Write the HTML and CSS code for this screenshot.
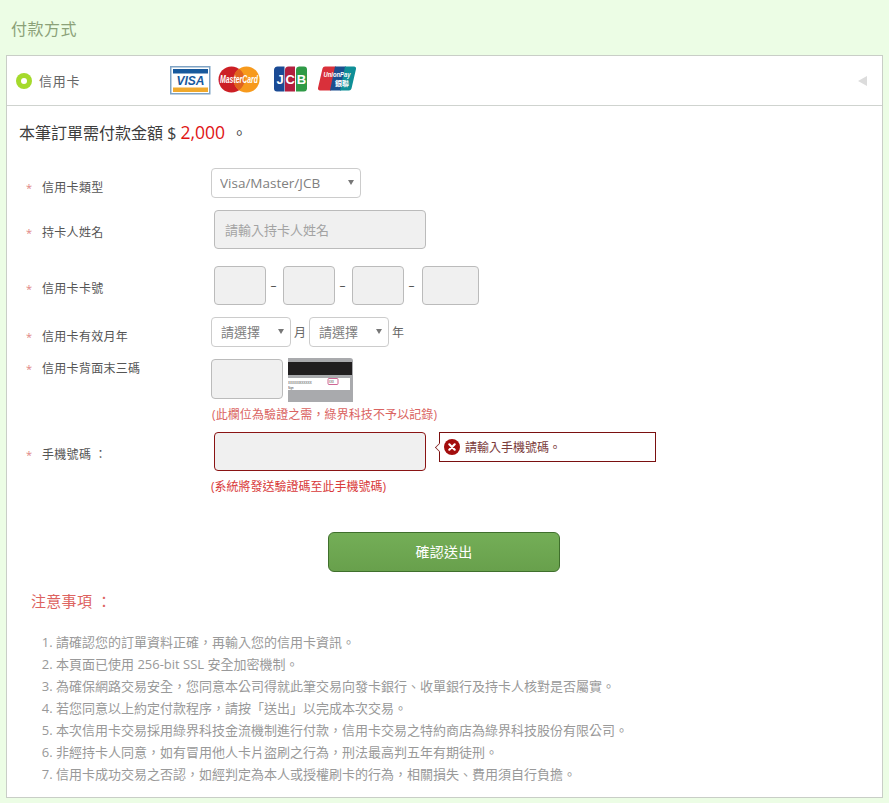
FILE: index.html
```html
<!DOCTYPE html>
<html lang="zh-Hant">
<head>
<meta charset="utf-8">
<title>付款方式</title>
<link rel="stylesheet" href="styles.css">
</head>
<body>
<h1 class="page-title">付款方式</h1>
<section class="panel">
  <header class="panel-head">
    <span class="radio"></span>
    <span class="method">信用卡</span>
    <div class="logos">
      <svg class="logo" width="41" height="29" viewBox="0 0 41 29">
        <rect x=".75" y=".75" width="39" height="27" fill="#fff" stroke="#7fa3c4" stroke-width="1.5"/>
        <rect x="3" y="3" width="35" height="4.5" fill="#17599c"/>
        <rect x="3" y="21.5" width="35" height="4.5" fill="#f0a92c"/>
        <text class="visa-text" x="20.5" y="19" text-anchor="middle">VISA</text>
      </svg>
      <svg class="logo logo-mc" width="42" height="27" viewBox="0 0 42 27">
        <circle cx="13.5" cy="13.5" r="13" fill="#cc1f25"/>
        <circle cx="28.5" cy="13.5" r="13" fill="#f79a1c"/>
        <path d="M21 2.8a13 13 0 0 1 0 21.4a13 13 0 0 1 0-21.4z" fill="#e0641f"/>
        <text class="mc-text" transform="translate(21 17) scale(.66 1)" text-anchor="middle">MasterCard</text>
      </svg>
      <svg class="logo logo-jcb" width="33" height="26" viewBox="0 0 33 26">
        <path d="M4 .5h6.500v25H3a3 3 0 0 1-3-3V4a3.500 3.500 0 0 1 4-3.500z" fill="#1a4a94"/>
        <path d="M14.500 .5h6.500v25H11V4a3.500 3.500 0 0 1 3.500-3.500z" fill="#b21f3e"/>
        <path d="M25 .5h5a3 3 0 0 1 3 3V23a3 3 0 0 1-3 2.500H22V4a3.500 3.500 0 0 1 3-3.500z" fill="#2f9a46"/>
        <text class="jcb-text" x="2.500" y="18">J</text>
        <text class="jcb-text" x="11.500" y="18">C</text>
        <text class="jcb-text" x="22.800" y="18">B</text>
      </svg>
      <svg class="logo logo-up" width="38" height="25" viewBox="0 0 38 25">
        <path d="M7 .5h11l-5 24H2a2 2 0 0 1-2-2.500L4.500 2.500A3 3 0 0 1 7 .5z" fill="#d9303a"/>
        <path d="M17 .5h11l-5 24H12z" fill="#1b4f8f"/>
        <path d="M27 .5h9a2 2 0 0 1 2 2.500l-4.500 19.500a3 3 0 0 1-2.500 2h-9z" fill="#0f8f97"/>
        <text class="up-text" transform="translate(19 11) scale(.9 1)" text-anchor="middle">UnionPay</text>
        <text class="up-text-cn" x="24" y="20" text-anchor="middle">銀聯</text>
      </svg>
    </div>
    <span class="collapse-arrow"></span>
  </header>

  <div class="panel-body">
    <p class="amount">本筆訂單需付款金額 $ <span class="price">2,000</span> <span class="amount-end">。</span></p>

    <form class="form">
      <div class="row row-type">
        <label class="label"><span class="star">*</span>信用卡類型</label>
        <div class="select-wrap select-wide"><select class="select"><option>Visa/Master/JCB</option></select></div>
      </div>

      <div class="row row-name">
        <label class="label"><span class="star">*</span>持卡人姓名</label>
        <input class="input input-name" placeholder="請輸入持卡人姓名">
      </div>

      <div class="row row-card">
        <label class="label"><span class="star">*</span>信用卡卡號</label>
        <div class="card-fields">
          <input class="input input-card">
          <span class="dash">–</span>
          <input class="input input-card">
          <span class="dash">–</span>
          <input class="input input-card">
          <span class="dash">–</span>
          <input class="input input-card input-card-last">
        </div>
      </div>

      <div class="row row-exp">
        <label class="label"><span class="star">*</span>信用卡有效月年</label>
        <div class="exp-fields">
          <div class="select-wrap select-small"><select class="select select-cjk"><option>請選擇</option></select></div>
          <span class="unit">月</span>
          <div class="select-wrap select-small"><select class="select select-cjk"><option>請選擇</option></select></div>
          <span class="unit">年</span>
        </div>
      </div>

      <div class="row row-cvv">
        <label class="label label-top"><span class="star">*</span>信用卡背面末三碼</label>
        <div class="cvv-col">
          <div class="cvv-fields">
            <input class="input input-cvv">
            <svg class="cvv-img" width="66" height="44" viewBox="0 0 66 44">
              <path d="M0 0h62a3 3 0 0 1 3 3v41H0z" fill="#a9aaad"/>
              <rect y="4" width="64" height="13" fill="#201e1f"/>
              <rect y="20" width="62" height="12" fill="#fff"/>
              <text class="cvv-text" transform="translate(0 25.500) scale(.85 1)">XXXXXXXXXXXX</text>
              <text class="cvv-text" transform="translate(0 30.500) scale(.8 1)">Sign</text>
              <rect x="40" y="20.500" width="10" height="6" rx="1" fill="#fff" stroke="#c2407a" stroke-width=".8"/>
              <text class="cvv-text" transform="translate(41 25.300) scale(.7 1)">XXX</text>
            </svg>
          </div>
          <p class="hint hint-cvv">(此欄位為驗證之需&#xFF0C;綠界科技不予以記錄)</p>
        </div>
      </div>

      <div class="row row-phone">
        <label class="label"><span class="star">*</span>手機號碼 &#xFF1A;</label>
        <input class="input input-name input-error">
        <div class="tip">
          <span class="tip-icon">
            <svg width="16" height="16" viewBox="0 0 16 16"><circle cx="8" cy="8" r="8" fill="#a30d0d"/><path d="M5.300 5.300l5.400 5.400M10.700 5.300l-5.400 5.400" stroke="#fff" stroke-width="2.200" stroke-linecap="round"/></svg>
          </span>
          <span>請輸入手機號碼。</span>
        </div>
      </div>
      <p class="hint hint-phone">(系統將發送驗證碼至此手機號碼)</p>

      <div class="actions"><button class="submit" type="button">確認送出</button></div>
    </form>

    <h2 class="notes-title">注意事項 &#xFF1A;</h2>
    <ol class="notes">
      <li>請確認您的訂單資料正確&#xFF0C;再輸入您的信用卡資訊。</li>
      <li>本頁面已使用 256-bit SSL 安全加密機制。</li>
      <li>為確保網路交易安全&#xFF0C;您同意本公司得就此筆交易向發卡銀行、收單銀行及持卡人核對是否屬實。</li>
      <li>若您同意以上約定付款程序&#xFF0C;請按「送出」以完成本次交易。</li>
      <li>本次信用卡交易採用綠界科技金流機制進行付款&#xFF0C;信用卡交易之特約商店為綠界科技股份有限公司。</li>
      <li>非經持卡人同意&#xFF0C;如有冒用他人卡片盜刷之行為&#xFF0C;刑法最高判五年有期徒刑。</li>
      <li>信用卡成功交易之否認&#xFF0C;如經判定為本人或授權刷卡的行為&#xFF0C;相關損失、費用須自行負擔。</li>
    </ol>
  </div>
</section>
</body>
</html>
```

FILE: styles.css
```css
* { box-sizing: border-box; }
html, body { margin: 0; padding: 0; }
body {
  background: #ecfde5;
  font-family: "Open Sans", "Noto Sans CJK TC", sans-serif;
  color: #444;
  height: 803px;
  overflow: hidden;
}
.page-title {
  margin: 0;
  padding: 17px 0 0 11px;
  height: 55px;
  font-size: 16px;
  line-height: 24px;
  font-weight: 400;
  letter-spacing: .5px;
  color: #8ba178;
}
.panel {
  margin-left: 6px;
  width: 877px;
  height: 743px;
  background: #fff;
  border: 1px solid #c9cec7;
}
.panel-head {
  display: flex;
  align-items: center;
  height: 50px;
  padding-left: 9px;
  border-bottom: 1px solid #cfd3cf;
}
.radio {
  width: 16px;
  height: 16px;
  border-radius: 50%;
  background: #a5da2c;
  display: flex;
  align-items: center;
  justify-content: center;
}
.radio::after {
  content: "";
  width: 6px;
  height: 6px;
  border-radius: 50%;
  background: #fff;
}
.method {
  margin-left: 7px;
  width: 131px;
  font-size: 13px;
  letter-spacing: .7px;
  color: #666;
}
.logos {
  display: flex;
  align-items: flex-start;
  gap: 8px;
  height: 29px;
  margin-top: -1px;
}
.logo { display: block; }
.logo-mc { margin-left: -1px; }
.logo-jcb { margin-left: 6px; }
.logo-up { margin-left: 3px; }
.visa-text { font: italic 700 12px "Liberation Sans", sans-serif; fill: #17599c; }
.mc-text { font: italic 700 10.500px "Liberation Sans", sans-serif; fill: #fff; }
.jcb-text { font: 700 13px "Liberation Sans", sans-serif; fill: #fff; }
.up-text { font: italic 700 6.500px "Liberation Sans", sans-serif; fill: #fff; }
.up-text-cn { font: 700 7px "Noto Sans CJK TC", sans-serif; fill: #fff; }
.collapse-arrow {
  margin-left: auto;
  margin-right: 15px;
  border-style: solid;
  border-width: 5px 9px 5px 0;
  border-color: transparent #dcdcdc transparent transparent;
}
.panel-body { padding-left: 12px; }
.amount {
  margin: 0;
  height: 40px;
  padding-top: 13px;
  font-size: 16px;
  line-height: 26px;
  color: #3d3d3d;
}
.price { color: #e01414; font-size: 17.500px; }
.amount-end { margin-left: 2px; }
.form { margin-top: 22px; }
.row { display: flex; align-items: center; }
.label {
  position: relative;
  flex: 0 0 192px;
  padding: 8px 0 0 23px;
  font-size: 12px;
  line-height: 16px;
  letter-spacing: .3px;
  color: #555;
}
.row-type .label, .row-exp .label { padding-top: 10px; }
.row-name .label, .row-card .label { padding-top: 6px; }
.row-cvv .label { padding-top: 3px; align-self: flex-start; }
.star {
  position: absolute;
  left: 7px;
  color: #e08585;
  font-size: 11px;
}
.select-wrap { position: relative; }
.select-wrap::after {
  content: "";
  position: absolute;
  right: 7px;
  top: 12px;
  border-style: solid;
  border-width: 5px 3px 0;
  border-color: #777 transparent transparent;
  pointer-events: none;
}
.select-wide { width: 150px; }
.select-small { width: 80px; }
.select {
  appearance: none;
  display: block;
  width: 100%;
  height: 30px;
  padding: 0 0 0 8px;
  background: #fff;
  border: 1px solid #ccc;
  border-radius: 4px;
  font-family: inherit;
  font-size: 13.500px;
  color: #808080;
}
.select-cjk { padding-left: 9px; font-size: 13px; }
.input {
  display: block;
  height: 39px;
  background: #f0f0f0;
  border: 1px solid #bbb;
  border-radius: 4px;
  font-family: inherit;
  font-size: 13px;
  padding: 0 10px;
}
.input::placeholder { color: #a3a3a3; opacity: 1; }
.input-name { width: 212px; margin-left: 3px; }
.row-name { margin-top: 12px; }
.row-card { margin-top: 17px; }
.card-fields { display: flex; align-items: center; margin-left: 3px; }
.input-card { width: 52px; }
.input-card-last { width: 57px; margin-left: 1px; }
.dash { width: 17px; padding-right: 2px; text-align: center; font-size: 12px; color: #555; }
.row-exp { margin-top: 12px; }
.exp-fields { display: flex; align-items: center; }
.unit { width: 18px; padding-left: 3px; font-size: 12px; color: #666; }
.row-cvv { margin-top: 11px; align-items: flex-start; }
.cvv-fields { display: flex; align-items: flex-start; }
.input-cvv { width: 72px; height: 40px; margin-top: 1px; }
.cvv-img { display: block; margin-left: 5px; }
.cvv-text { font: 3.500px "Liberation Sans", sans-serif; fill: #333; }
.hint {
  margin: 0;
  font-size: 12px;
  line-height: 16px;
  color: #da6361;
}
.hint-cvv { margin: 5px 0 0 1px; letter-spacing: .1px; }
.row-phone { margin-top: 9px; align-items: flex-start; }
.row-phone .label { padding-top: 15px; }
.input-error { border-color: #8a1414; margin-left: 3px; }
.tip {
  position: relative;
  display: flex;
  align-items: center;
  gap: 5px;
  width: 217px;
  height: 30px;
  margin-left: 13px;
  padding-left: 4px;
  background: #fff;
  border: 1px solid #7a1010;
  font-size: 12px;
  color: #7a3a3a;
}
.tip::before {
  content: "";
  position: absolute;
  left: -5px;
  top: 10px;
  width: 8px;
  height: 8px;
  background: #fff;
  border-left: 1px solid #7a1010;
  border-bottom: 1px solid #7a1010;
  transform: rotate(45deg) scale(.7);
}
.tip-icon { display: flex; }
.hint-phone { margin: 8px 0 0 192px; color: #d93a3a; }
.actions { margin-top: 37px; padding-left: 309px; }
.submit {
  display: block;
  width: 232px;
  height: 40px;
  padding: 0 0 2px;
  border: 1px solid #3f6f2c;
  border-radius: 6px;
  background: linear-gradient(#74ae57, #68a04c);
  color: #fff;
  font-family: inherit;
  font-size: 14px;
  letter-spacing: .3px;
}
.notes-title {
  margin: 19px 0 0 12px;
  font-size: 15px;
  line-height: 20px;
  font-weight: 400;
  letter-spacing: .3px;
  color: #dd6360;
}
.notes {
  margin: 20px 0 0;
  padding-left: 37px;
  font-size: 13px;
  line-height: 22px;
  color: #999;
}
```
